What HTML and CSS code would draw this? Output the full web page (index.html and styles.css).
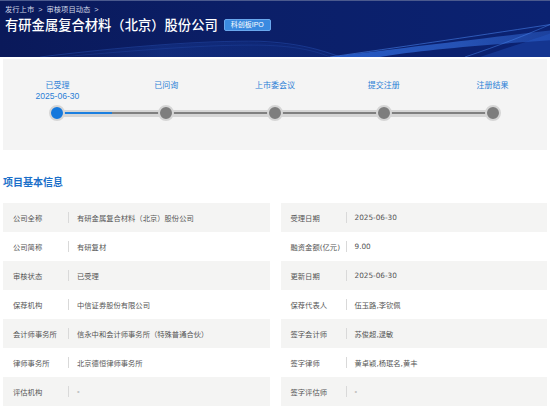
FILE: index.html
```html
<!DOCTYPE html>
<html lang="zh-CN">
<head>
<meta charset="utf-8">
<title>有研金属复合材料（北京）股份公司</title>
<link rel="stylesheet" href="styles.css">
</head>
<body>
<header class="hero">
  <svg class="waves" viewBox="0 0 550 57" preserveAspectRatio="none" aria-hidden="true">
    <defs>
      <linearGradient id="g1" x1="0" y1="0" x2="1" y2="0">
        <stop offset="0" stop-color="#2a5fd0" stop-opacity="0"/>
        <stop offset="0.4" stop-color="#2a62d6" stop-opacity="0.45"/>
        <stop offset="1" stop-color="#2a62d6" stop-opacity="0.15"/>
      </linearGradient>
      <linearGradient id="g2" x1="0" y1="0" x2="1" y2="0">
        <stop offset="0" stop-color="#2f6fe6" stop-opacity="0.9"/>
        <stop offset="0.6" stop-color="#3a78ea" stop-opacity="0.7"/>
        <stop offset="1" stop-color="#3a78ea" stop-opacity="0.45"/>
      </linearGradient>
    </defs>
    <path d="M40 57 C120 48 200 40 260 42 C300 44 320 50 345 57 Z" fill="url(#g1)" opacity="0.45"/>
    <path d="M40 57 C120 47 200 40 260 41 C300 43 322 50 340 57" fill="none" stroke="#3a6fe0" stroke-width="0.6" opacity="0.5"/>
    <path d="M60 57 C140 50 210 44 262 45 C300 46 318 52 330 57" fill="none" stroke="#3a6fe0" stroke-width="0.5" opacity="0.35"/>
    <path d="M330 57 C400 48 450 42 550 30 L550 40 C480 45 420 50 380 57 Z" fill="url(#g2)" opacity="0.8"/>
    <path d="M330 57 C400 47 460 38 550 24" fill="none" stroke="#4a86f0" stroke-width="0.8" opacity="0.7"/>
    <path d="M465 57 C500 45 525 35 550 24" fill="none" stroke="#4a86f0" stroke-width="0.8" opacity="0.6"/>
    <path d="M480 57 C510 47 530 40 550 33 L550 57 Z" fill="#2a62d6" opacity="0.3"/>
  </svg>
  <div class="crumbs">发行上市 <span class="arr">&gt;</span> 审核项目动态 <span class="arr">&gt;</span></div>
  <div class="title-row">
    <h1>有研金属复合材料（北京）股份公司</h1>
    <span class="badge">科创板IPO</span>
  </div>
</header>

<section class="progress">
  <div class="labels">
    <div class="label">已受理<br><span class="date">2025-06-30</span></div>
    <div class="label">已问询</div>
    <div class="label">上市委会议</div>
    <div class="label">提交注册</div>
    <div class="label">注册结果</div>
  </div>
  <div class="nodes">
    <div class="track"><div class="fill"></div></div>
    <div class="node-cell"><span class="node active"></span></div>
    <div class="node-cell"><span class="node"></span></div>
    <div class="node-cell"><span class="node"></span></div>
    <div class="node-cell"><span class="node"></span></div>
    <div class="node-cell"><span class="node"></span></div>
  </div>
</section>

<h2 class="section-title">项目基本信息</h2>

<div class="info">
  <div class="cell shade"><span class="k">公司全称</span><span class="sep"></span><span class="v">有研金属复合材料（北京）股份公司</span></div>
  <div class="cell shade"><span class="k">受理日期</span><span class="sep"></span><span class="v">2025-06-30</span></div>
  <div class="cell"><span class="k">公司简称</span><span class="sep"></span><span class="v">有研复材</span></div>
  <div class="cell"><span class="k">融资金额(亿元)</span><span class="sep"></span><span class="v">9.00</span></div>
  <div class="cell shade"><span class="k">审核状态</span><span class="sep"></span><span class="v">已受理</span></div>
  <div class="cell shade"><span class="k">更新日期</span><span class="sep"></span><span class="v">2025-06-30</span></div>
  <div class="cell"><span class="k">保荐机构</span><span class="sep"></span><span class="v">中信证券股份有限公司</span></div>
  <div class="cell"><span class="k">保荐代表人</span><span class="sep"></span><span class="v">伍玉路,李钦佩</span></div>
  <div class="cell shade"><span class="k">会计师事务所</span><span class="sep"></span><span class="v">信永中和会计师事务所（特殊普通合伙）</span></div>
  <div class="cell shade"><span class="k">签字会计师</span><span class="sep"></span><span class="v">苏俊超,逯敏</span></div>
  <div class="cell"><span class="k">律师事务所</span><span class="sep"></span><span class="v">北京德恒律师事务所</span></div>
  <div class="cell"><span class="k">签字律师</span><span class="sep"></span><span class="v">黄卓颖,杨珉名,黄丰</span></div>
  <div class="cell shade"><span class="k">评估机构</span><span class="sep"></span><span class="v">-</span></div>
  <div class="cell shade"><span class="k">签字评估师</span><span class="sep"></span><span class="v">-</span></div>
</div>
</body>
</html>
```

FILE: styles.css
```css
html, body {
  margin: 0;
  padding: 0;
  background: #ffffff;
  font-family: "Liberation Sans", "Noto Sans CJK SC", sans-serif;
  color: #555;
}

.hero {
  position: relative;
  height: 57px;
  box-sizing: border-box;
  padding: 4px 5px 0;
  background: linear-gradient(90deg, #0a195a 0%, #0b1f68 45%, #0b2272 100%);
  border-top: 1px solid #4b5a8e;
  overflow: hidden;
}

.waves {
  position: absolute;
  left: 0;
  top: 0;
  width: 100%;
  height: 100%;
}

.crumbs {
  position: relative;
  font-size: 7.3px;
  line-height: 9px;
  color: #cfd5e6;
}

.crumbs .arr {
  margin: 0 2px;
}

.title-row {
  position: relative;
  display: flex;
  align-items: center;
  margin-top: 3px;
}

.title-row h1 {
  margin: 0;
  font-size: 13.3px;
  line-height: 16px;
  font-weight: 500;
  color: #ffffff;
  font-family: "Noto Sans CJK SC", sans-serif;
}

.badge {
  margin-left: 6px;
  padding: 0 6px;
  height: 10px;
  line-height: 10px;
  font-size: 7px;
  color: #ffffff;
  background: #3a8ae0;
  border: 0.5px solid #6aa8ee;
  border-radius: 2px;
}

.progress {
  margin: 2px 3px 0;
  height: 91px;
  box-sizing: border-box;
  padding-top: 22px;
  background: #f4f4f4;
}

.labels {
  display: grid;
  grid-template-columns: repeat(5, 1fr);
  height: 20px;
}

.label {
  text-align: center;
  font-size: 8px;
  line-height: 10px;
  color: #2b7fd6;
}

.label .date {
  font-size: 8.6px;
}

.nodes {
  position: relative;
  display: grid;
  grid-template-columns: repeat(5, 1fr);
  height: 16px;
  margin-top: 4px;
}

.track {
  position: absolute;
  left: 10%;
  right: 10%;
  top: 4.5px;
  height: 7px;
  background: #d5d5d5;
}

.track::before {
  content: "";
  position: absolute;
  left: 0;
  right: 0;
  top: 2.5px;
  height: 2px;
  background: #808080;
}

.fill {
  position: absolute;
  left: 0;
  top: 2.5px;
  width: 12.5%;
  height: 2px;
  background: #1a7fe0;
}

.node-cell {
  display: flex;
  justify-content: center;
  align-items: center;
}

.node {
  position: relative;
  width: 16px;
  height: 16px;
  box-sizing: border-box;
  border-radius: 50%;
  border: 2.5px solid #d5d5d5;
  background: #7d7d7d;
}

.node.active {
  background: #1578dc;
}

.section-title {
  margin: 25px 3px 14px;
  font-size: 10px;
  line-height: 14px;
  font-weight: 700;
  color: #1a6fc9;
  font-family: "Noto Sans CJK SC", sans-serif;
}

.info {
  display: grid;
  grid-template-columns: 1fr 1fr;
  column-gap: 11px;
  margin: 0 3px;
}

.cell {
  display: flex;
  align-items: center;
  height: 29px;
  padding-left: 10px;
  font-size: 7.3px;
  color: #555;
  font-family: "DejaVu Sans", "Noto Sans CJK SC", sans-serif;
}

.cell.shade {
  background: #f4f4f3;
}

.k {
  width: 55px;
  white-space: nowrap;
}

.sep {
  width: 1px;
  height: 11px;
  background: #d9d9d9;
}

.v {
  margin-left: 8px;
  white-space: nowrap;
}
```
